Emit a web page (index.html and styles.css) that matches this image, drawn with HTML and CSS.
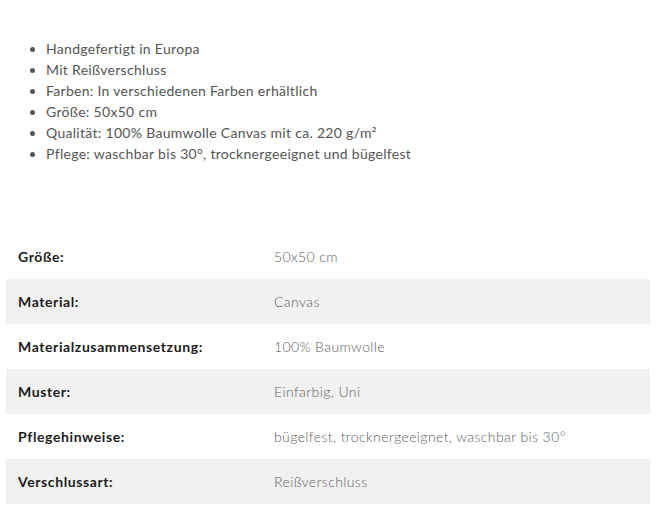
FILE: index.html
```html
<!DOCTYPE html>
<html lang="de">
<head>
    <meta charset="UTF-8">
    <meta name="viewport" content="width=device-width, initial-scale=1.0">
    <title>Produktdetails</title>
    <link rel="stylesheet" href="styles.css">
</head>
<body>
    <div class="wrapper">
        <ul class="features">
            <li>Handgefertigt in Europa</li>
            <li>Mit Reißverschluss</li>
            <li>Farben: In verschiedenen Farben erhältlich</li>
            <li>Größe: 50x50 cm</li>
            <li>Qualität: 100% Baumwolle Canvas mit ca. 220 g/m²</li>
            <li>Pflege: waschbar bis 30°, trocknergeeignet und bügelfest</li>
        </ul>

        <table class="specs">
            <tr><th>Größe:</th><td>50x50 cm</td></tr>
            <tr><th>Material:</th><td>Canvas</td></tr>
            <tr><th>Materialzusammensetzung:</th><td>100% Baumwolle</td></tr>
            <tr><th>Muster:</th><td>Einfarbig, Uni</td></tr>
            <tr><th>Pflegehinweise:</th><td>bügelfest, trocknergeeignet, waschbar bis 30°</td></tr>
            <tr><th>Verschlussart:</th><td>Reißverschluss</td></tr>
        </table>
    </div>
</body>
</html>
```

FILE: styles.css
```css
:root {
    --text-color: #555;
    --label-color: #1c1c1c;
    --value-color: #5e5e5e;
    --stripe-color: #f1f1f1;
}

body {
    margin: 0;
    font-family: 'Lato', sans-serif;
    font-size: 14px;
    color: var(--text-color);
    background-color: #fff;
}

.wrapper {
    padding: 38px 10px 0 6px;
}

.features {
    margin: 0 0 70px 0;
    padding-left: 40px;
    line-height: 21px;
    letter-spacing: 0.3px;
}

.specs {
    width: 644px;
    border-collapse: collapse;
}

.specs th,
.specs td {
    height: 45px;
    padding: 0 12px;
    text-align: left;
    vertical-align: middle;
}

.specs th {
    width: 232px;
    font-weight: 700;
    letter-spacing: 0.6px;
    color: var(--label-color);
}

.specs td {
    color: var(--value-color);
    font-weight: 300;
    letter-spacing: 0.4px;
}

.specs tr:nth-child(even) {
    background-color: var(--stripe-color);
}
```
